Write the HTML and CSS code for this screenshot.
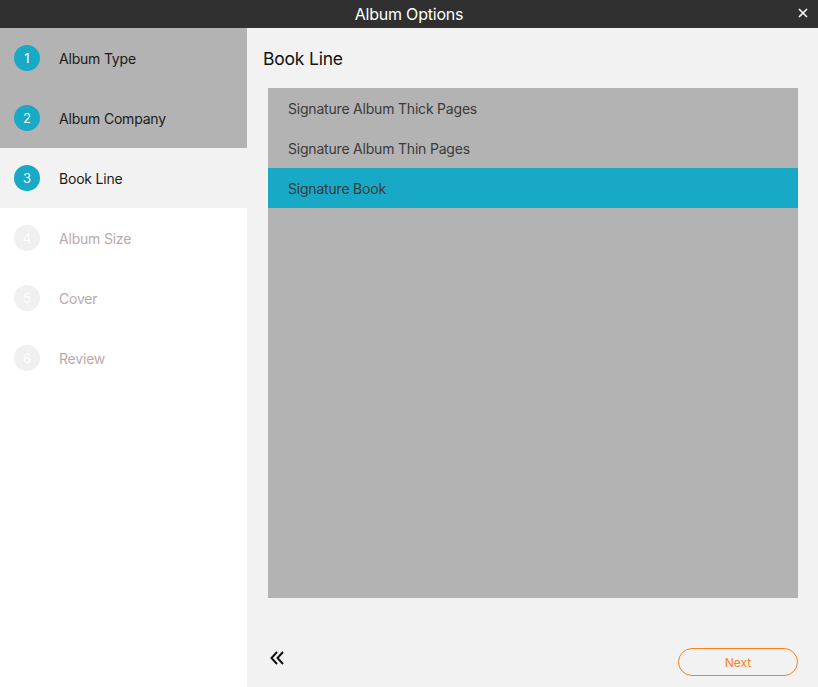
FILE: index.html
```html
<!DOCTYPE html>
<html>
<head>
<meta charset="utf-8">
<link rel="stylesheet" href="styles.css">
</head>
<body>
<div class="window">
  <div class="titlebar">
    <span class="title">Album Options</span>
    <span class="close">
      <svg width="10" height="10" viewBox="0 0 10 10"><path d="M1 1L9 9M9 1L1 9" stroke="#fff" stroke-width="1.6" fill="none"/></svg>
    </span>
  </div>
  <div class="body">
    <nav class="steps">
      <div class="step done"><span class="num">1</span><span class="label">Album Type</span></div>
      <div class="step done"><span class="num">2</span><span class="label">Album Company</span></div>
      <div class="step current"><span class="num">3</span><span class="label">Book Line</span></div>
      <div class="step todo"><span class="num">4</span><span class="label">Album Size</span></div>
      <div class="step todo"><span class="num">5</span><span class="label">Cover</span></div>
      <div class="step todo"><span class="num">6</span><span class="label">Review</span></div>
    </nav>
    <main class="panel">
      <h1 class="heading">Book Line</h1>
      <ul class="options">
        <li class="option">Signature Album Thick Pages</li>
        <li class="option">Signature Album Thin Pages</li>
        <li class="option selected">Signature Book</li>
      </ul>
      <div class="footer">
        <span class="back">
          <svg width="16" height="14" viewBox="0 0 16 14"><path d="M8 1L2.5 7L8 13M14 1L8.5 7L14 13" stroke="#111" stroke-width="2" fill="none"/></svg>
        </span>
        <button class="next">Next</button>
      </div>
    </main>
  </div>
</div>
</body>
</html>
```
FILE: styles.css
```css
* { box-sizing: border-box; }
html, body { margin: 0; padding: 0; }
body {
  font-family: Inter, "Noto Sans", sans-serif;
  width: 818px;
  height: 687px;
  overflow: hidden;
}
.window { display: flex; flex-direction: column; height: 687px; }
.titlebar {
  height: 28px;
  background: #303030;
  color: #fff;
  display: flex;
  align-items: center;
  justify-content: center;
  position: relative;
}
.title { font-size: 16px; letter-spacing: -0.2px; }
.close { position: absolute; right: 10px; top: 8px; width: 10px; height: 10px; display: flex; }
.body { flex: 1; display: flex; }
.steps { width: 247px; background: #fff; display: flex; flex-direction: column; }
.step {
  height: 60px;
  display: flex;
  align-items: center;
  padding-left: 14px;
}
.num {
  width: 26px; height: 26px; border-radius: 50%;
  display: flex; align-items: center; justify-content: center;
  font-size: 13px; color: #fff; background: #17a9c5;
  margin-right: 19px;
}
.label { font-size: 14px; letter-spacing: -0.2px; color: #1a1a1a; }
.step.done { background: #b3b3b3; }
.step.current { background: #f2f2f2; }
.step.todo .num { background: #f0f0f0; color: #fff; }
.step.todo .label { color: #baa9ac; }
.panel {
  flex: 1;
  background: #f2f2f2;
  display: flex;
  flex-direction: column;
  padding: 0 20px 11px 16px;
}
.heading {
  font-size: 17.5px;
  letter-spacing: -0.2px;
  font-weight: 400;
  margin: 0;
  height: 60px;
  display: flex;
  align-items: center;
  color: #111;
}
.options {
  list-style: none;
  margin: 0 0 0 5px;
  padding: 0;
  height: 510px;
  background: #b3b3b3;
}
.option {
  height: 40px;
  display: flex;
  align-items: center;
  padding-left: 20px;
  font-size: 14px;
  letter-spacing: -0.2px;
  color: #3a3a3a;
}
.option.selected { background: #17a9c5; }
.footer {
  margin-top: auto;
  display: flex;
  justify-content: space-between;
  align-items: center;
  padding-left: 6px;
}
.back { display: flex; margin-top: -8px; }
.next {
  width: 120px;
  height: 28px;
  border: 1px solid #ff7f1a;
  border-radius: 14px;
  background: transparent;
  color: #ff7f1a;
  font-family: Inter, "Noto Sans", sans-serif;
  font-size: 12px;
}
```
